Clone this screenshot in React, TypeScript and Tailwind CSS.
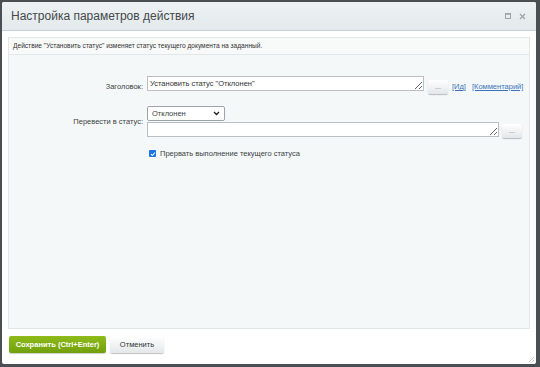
import React from "react";

const font = { fontFamily: '"Liberation Sans", Arial, sans-serif' };

function DotsButton({ className = "" }: { className?: string }) {
  return (
    <button
      className={`w-[20px] h-[14px] rounded-[2px] bg-gradient-to-b from-white to-[#e3e7e9] shadow-[0_1px_1px_rgba(0,0,0,0.25)] text-[7px] leading-[10px] text-[#6b7378] ${className}`}
    >
      ...
    </button>
  );
}

export default function App() {
  return (
    <div className="w-[540px] h-[367px] bg-[#4a4f54] pt-[2px] pl-[2px] overflow-hidden" style={font}>
      <div className="relative w-[534px] h-[362px] bg-white rounded-[2px] flex flex-col">
        {/* header */}
        <div className="h-[29px] shrink-0 flex items-center justify-between pl-[9px] pr-[10px] bg-gradient-to-b from-[#eef2f4] to-[#e3e9ec] border-b border-[#c8d0d4] rounded-t-[2px]">
          <span className="text-[12px] text-[#44494c]">Настройка параметров действия</span>
          <div className="flex items-center gap-[8px] text-[#9aa3a8]">
            <svg width="6" height="6" viewBox="0 0 6 6">
              <rect x="0.5" y="0.5" width="5" height="5" fill="none" stroke="currentColor" strokeWidth="1" />
              <line x1="0" y1="1.2" x2="6" y2="1.2" stroke="currentColor" strokeWidth="1" />
            </svg>
            <svg width="7" height="7" viewBox="0 0 7 7">
              <path d="M1 1 L6 6 M6 1 L1 6" stroke="currentColor" strokeWidth="1.2" />
            </svg>
          </div>
        </div>

        {/* body */}
        <div className="flex-1 px-[6px] pt-[6px]">
          <div className="h-[292px] border border-[#e2e7e9] bg-[#f5f8f9] flex flex-col">
            <div className="h-[17px] shrink-0 flex items-center pl-[4px] border-b border-[#e2e7e9] bg-[#f8fafa] text-[6.6px] text-[#333]">
              Действие "Установить статус" изменяет статус текущего документа на заданный.
            </div>

            <div className="flex flex-col pt-[21px] text-[7.5px] text-[#3a3f42]">
              {/* row 1 */}
              <div className="flex items-start">
                <div className="w-[134px] text-right pt-[5px]">Заголовок:</div>
                <textarea
                  className="ml-[4px] w-[277px] h-[15px] border border-[#b9bfc3] bg-white text-[7.5px] leading-[10px] px-[2px] pt-[2px] text-[#333] outline-none overflow-hidden"
                  defaultValue={'Установить статус "Отклонен"'}
                />
                <DotsButton className="ml-[4px] mt-[4px]" />
                <a className="ml-[4px] mt-[5px] text-[#3a74b8] underline">[Ид]</a>
                <a className="ml-[6px] mt-[5px] text-[#3a74b8] underline">[Комментарий]</a>
              </div>

              {/* row 2 */}
              <div className="flex items-center mt-[12px]">
                <div className="w-[134px] text-right">Перевести в статус:</div>
                <div className="ml-[4px] flex flex-col gap-[1px]">
                  <div className="w-[78px] h-[15px] border border-[#9ea5aa] rounded-[2px] bg-white flex items-center justify-between pl-[4px] pr-[4px]">
                    <span>Отклонен</span>
                    <svg width="7" height="5" viewBox="0 0 7 5">
                      <path d="M1 1 L3.5 3.5 L6 1" fill="none" stroke="#222" strokeWidth="1.4" />
                    </svg>
                  </div>
                  <div className="flex items-start">
                    <textarea className="w-[352px] h-[15px] border border-[#b9bfc3] bg-white outline-none overflow-hidden" />
                    <DotsButton className="ml-[3px] mt-[2px]" />
                  </div>
                </div>
              </div>

              {/* row 3 */}
              <div className="flex items-center mt-[10px] pl-[140px]">
                <div className="w-[7px] h-[7px] rounded-[1px] bg-[#1a73e8] flex items-center justify-center">
                  <svg width="6" height="6" viewBox="0 0 6 6">
                    <path d="M1 3.2 L2.4 4.5 L5 1.5" fill="none" stroke="white" strokeWidth="1.1" />
                  </svg>
                </div>
                <span className="ml-[4px]">Прервать выполнение текущего статуса</span>
              </div>
            </div>
          </div>
        </div>

        {/* footer */}
        <div className="h-[34px] shrink-0 flex items-start pt-[6px] pl-[7px] gap-[4px]">
          <button className="w-[97px] h-[17px] rounded-[2px] bg-gradient-to-b from-[#8ebb1a] to-[#72a00a] text-white text-[7.5px] font-semibold shadow-[0_1px_1px_rgba(0,0,0,0.2)]">
            Сохранить (Ctrl+Enter)
          </button>
          <button className="w-[54px] h-[17px] rounded-[2px] bg-gradient-to-b from-white to-[#e4e7e9] text-[#333] text-[7.5px] shadow-[0_1px_1px_rgba(0,0,0,0.25)]">
            Отменить
          </button>
        </div>

        <svg className="absolute right-[2px] bottom-[2px]" width="6" height="6" viewBox="0 0 6 6">
          <path d="M6 1 L1 6 M6 4 L4 6" stroke="#c2c8cc" strokeWidth="1" />
        </svg>
      </div>
    </div>
  );
}
